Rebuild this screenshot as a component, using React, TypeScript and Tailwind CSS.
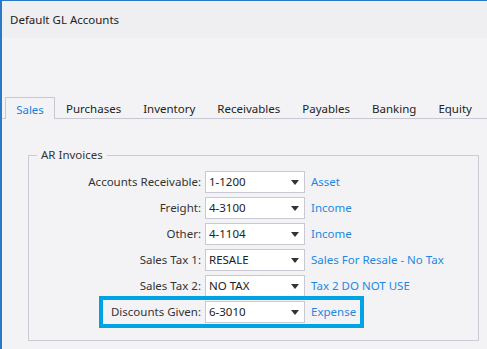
const tabs = ["Sales", "Purchases", "Inventory", "Receivables", "Payables", "Banking", "Equity"];

const rows = [
  { label: "Accounts Receivable:", value: "1-1200", link: "Asset" },
  { label: "Freight:", value: "4-3100", link: "Income" },
  { label: "Other:", value: "4-1104", link: "Income" },
  { label: "Sales Tax 1:", value: "RESALE", link: "Sales For Resale - No Tax" },
  { label: "Sales Tax 2:", value: "NO TAX", link: "Tax 2 DO NOT USE" },
  { label: "Discounts Given:", value: "6-3010", link: "Expense", highlight: true },
];

function Combo({ value }: { value: string }) {
  return (
    <div className="flex h-[22px] w-[100px] items-center justify-between border border-[#c9c9d3] bg-white pl-[3px] pr-[5px]">
      <span className="text-[#222]">{value}</span>
      <svg width="8" height="5" viewBox="0 0 8 5">
        <path d="M0 0h8L4 5z" fill="#333" />
      </svg>
    </div>
  );
}

export default function App() {
  return (
    <div
      className="flex h-[349px] w-[487px] flex-col overflow-hidden border-l-2 border-t border-[#2a78c8] bg-[#f3f3f6] text-[11.5px] text-[#333]"
      style={{ fontFamily: '"Noto Sans", "Open Sans", sans-serif' }}
    >
      <div className="flex h-[37px] items-center bg-[#efeff2] bg-[radial-gradient(#dedee4_0.6px,transparent_0.6px)] bg-[length:4px_4px] pl-[8px] text-[#222]">
        Default GL Accounts
      </div>

      <div className="mt-[59px] flex h-[22px] items-end whitespace-nowrap border-b border-[#c8c8d2] pl-[3px]">
        {tabs.map((t, i) =>
          i === 0 ? (
            <div
              key={t}
              className="-mb-px flex h-[22px] w-[50px] shrink-0 items-center justify-center border border-b-0 border-[#c8c8d2] bg-[#f3f3f6] pt-[2px] text-[#1e7fd6]"
            >
              {t}
            </div>
          ) : (
            <div key={t} className="flex h-[21px] shrink-0 items-center px-[11px] pt-[2px] text-[#222]">
              {t}
            </div>
          )
        )}
      </div>

      <fieldset className="mr-[8px] ml-[26px] mt-[28px] h-[194px] border border-[#cbcbd6] px-0 pb-0 pt-[6px]">
        <legend className="ml-[8px] px-[4px] leading-[16px]">AR Invoices</legend>
        <div className="flex flex-col">
          {rows.map((r) => (
            <div key={r.label} className="relative flex h-[26px] items-center">
              <span className="w-[172px] text-right">{r.label}</span>
              <div className="ml-[4px]">
                <Combo value={r.value} />
              </div>
              <span className="ml-[6px] text-[#1e88e0]">{r.link}</span>
              {r.highlight && (
                <div className="pointer-events-none absolute left-[70px] top-[-3px] h-[32px] w-[265px] border-4 border-[#00a2e6]" />
              )}
            </div>
          ))}
        </div>
      </fieldset>
    </div>
  );
}
